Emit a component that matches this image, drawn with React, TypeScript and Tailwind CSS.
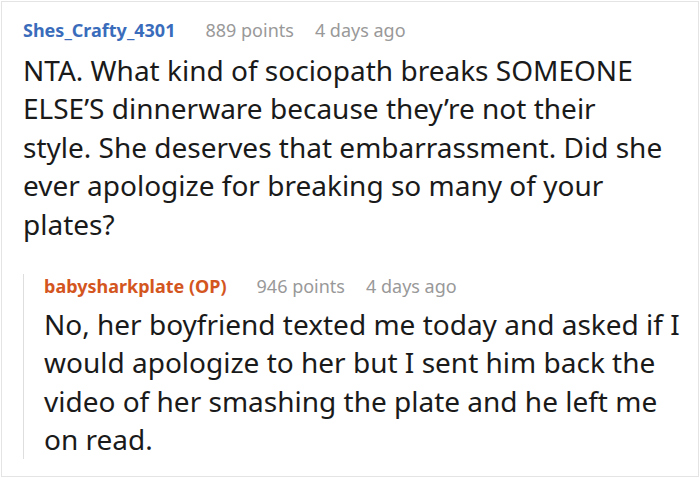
const meta = "text-[18px] leading-[24px] text-[#999999]";

function Header({ name, color, points }: { name: string; color: string; points: string }) {
    return (
        <div className="flex items-center whitespace-nowrap">
            <span className={`text-[18px] leading-[24px] font-bold ${color}`}>{name}</span>
            <span className={`${meta} ml-[30px]`}>{points}</span>
            <span className={`${meta} ml-[21px]`}>4 days ago</span>
        </div>
    );
}

function Body({ lines }: { lines: string[] }) {
    return (
        <div className="text-[28px] leading-[38.4px] text-[#1a1a1a]">
            {lines.map((line, i) => (
                <div key={i} className="whitespace-nowrap">{line}</div>
            ))}
        </div>
    );
}

export default function App() {
    return (
        <div className="w-[700px] h-[478px] p-px bg-white" style={{ fontFamily: '"Noto Sans", sans-serif' }}>
            <div className="h-[476px] border border-[#e4e4e4] pl-[21px] pt-[16px]">
                <Header name="Shes_Crafty_4301" color="text-[#3a6cbc]" points="889 points" />
                <div className="mt-[9px]">
                    <Body
                        lines={[
                            "NTA. What kind of sociopath breaks SOMEONE",
                            "ELSE’S dinnerware because they’re not their",
                            "style. She deserves that embarrassment. Did she",
                            "ever apologize for breaking so many of your",
                            "plates?",
                        ]}
                    />
                </div>
                <div className="mt-[40px] border-l border-[#dedede] pl-[20px]">
                    <div className="-mt-[9px]">
                        <Header name="babysharkplate (OP)" color="text-[#d4561f]" points="946 points" />
                    </div>
                    <div className="mt-[7px]">
                        <Body
                            lines={[
                                "No, her boyfriend texted me today and asked if I",
                                "would apologize to her but I sent him back the",
                                "video of her smashing the plate and he left me",
                                "on read.",
                            ]}
                        />
                    </div>
                </div>
            </div>
        </div>
    );
}
